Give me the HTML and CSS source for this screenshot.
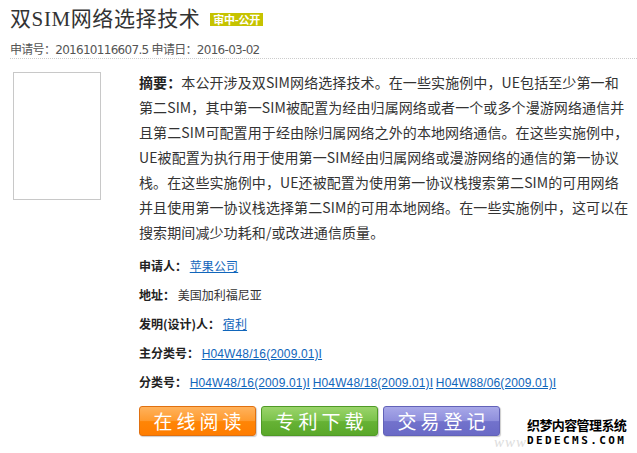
FILE: index.html
```html
<!DOCTYPE html>
<html lang="zh-CN">
<head>
  <meta charset="UTF-8">
  <title>双SIM网络选择技术</title>
  <link rel="stylesheet" href="styles.css">
</head>
<body>
  <div class="page">
    <div class="head">
      <div class="title-row">
        <h1>双SIM网络选择技术</h1>
        <span class="badge">审中-公开</span>
      </div>
      <p class="sub">申请号：201610116607.5 申请日：2016-03-02</p>
    </div>

    <div class="main">
      <div class="thumb"></div>
      <div class="info">
        <p class="abstract"><b>摘要：</b>本公开涉及双SIM网络选择技术。在一些实施例中，UE包括至少第一和<br>第二SIM，其中第一SIM被配置为经由归属网络或者一个或多个漫游网络通信并<br>且第二SIM可配置用于经由除归属网络之外的本地网络通信。在这些实施例中，<br>UE被配置为执行用于使用第一SIM经由归属网络或漫游网络的通信的第一协议<br>栈。在这些实施例中，UE还被配置为使用第一协议栈搜索第二SIM的可用网络<br>并且使用第一协议栈选择第二SIM的可用本地网络。在一些实施例中，这可以在<br>搜索期间减少功耗和/或改进通信质量。</p>

        <div class="rows">
          <div class="row"><b>申请人：</b> <a href="#">苹果公司</a></div>
          <div class="row"><b>地址：</b> 美国加利福尼亚</div>
          <div class="row"><b>发明(设计)人：</b> <a href="#">宿利</a></div>
          <div class="row"><b>主分类号：</b> <a href="#">H04W48/16(2009.01)I</a></div>
          <div class="row"><b>分类号：</b> <a href="#">H04W48/16(2009.01)I</a> <a href="#">H04W48/18(2009.01)I</a> <a href="#">H04W88/06(2009.01)I</a></div>
        </div>

        <div class="buttons">
          <a class="btn orange" href="#">在线阅读</a>
          <a class="btn green" href="#">专利下载</a>
          <a class="btn purple" href="#">交易登记</a>
        </div>
      </div>
    </div>

    <div class="watermark">
      <span class="wm-www">www</span>
      <span class="wm-cn">织梦内容管理系统</span>
      <span class="wm-en">DEDECMS.COM</span>
    </div>
  </div>
</body>
</html>
```

FILE: styles.css
```css
* {
  margin: 0;
  padding: 0;
  box-sizing: border-box;
}

html, body {
  height: 100%;
  background: #fff;
  font-family: "Noto Sans CJK SC", "DejaVu Sans", sans-serif;
  color: #333;
  overflow: hidden;
}

.page {
  position: relative;
  height: 100%;
}

.head {
  margin: 0 0 0 10px;
  padding-top: 4px;
  border-bottom: 1px dotted #ccc;
  height: 59px;
}

.title-row {
  display: flex;
  align-items: center;
  gap: 10px;
  height: 30px;
}

h1 {
  font-family: "Liberation Serif", "Noto Sans CJK SC", serif;
  font-size: 21px;
  font-weight: normal;
  color: #333;
  line-height: 30px;
  letter-spacing: 0.6px;
}

.badge {
  background: #c6c300;
  color: #fff;
  font-size: 11px;
  font-weight: bold;
  line-height: 13px;
  padding: 0 3px;
  margin-top: 1px;
  letter-spacing: -0.3px;
}

.sub {
  font-family: "DejaVu Sans", "Noto Sans CJK SC", sans-serif;
  font-size: 12px;
  color: #555;
  line-height: 16px;
  margin-top: 8px;
  letter-spacing: -0.7px;
}

.main {
  display: flex;
  padding-top: 11px;
}

.thumb {
  width: 88px;
  height: 128px;
  border: 1px solid #c8c8c8;
  margin: 2px 0 0 13px;
  flex: none;
}

.info {
  margin-left: 38px;
}

.abstract {
  font-size: 14px;
  line-height: 25px;
  white-space: nowrap;
  color: #333;
  letter-spacing: 0.1px;
}

.abstract b {
  color: #222;
}

.rows {
  margin-top: 6px;
}

.row {
  height: 29px;
  font-size: 12px;
  line-height: 29px;
  color: #333;
  white-space: nowrap;
}

.row b {
  color: #222;
}

.row a {
  color: #1166bb;
  text-decoration: underline;
  font-family: "Liberation Sans", "Noto Sans CJK SC", sans-serif;
  letter-spacing: 0.12px;
}

.buttons {
  display: flex;
  gap: 5px;
  margin-top: 10px;
}

.btn {
  display: block;
  width: 117px;
  height: 30px;
  line-height: 28px;
  border-radius: 3px;
  color: #fff;
  text-align: center;
  text-decoration: none;
  font-size: 19px;
  letter-spacing: 4px;
  text-indent: 4px;
  box-shadow: 1px 1px 1px rgba(0, 0, 0, 0.2);
}

.orange {
  background: linear-gradient(#ffb25c, #ff9a2e 50%, #ff8506 52%, #ff7d00);
  border: 1px solid #e07010;
}

.green {
  background: linear-gradient(#9ad46a, #7bc24b 50%, #66b235 52%, #5aa82a);
  border: 1px solid #4f9a26;
}

.purple {
  background: linear-gradient(#a8a8e8, #8e8edc 50%, #7272cc 52%, #6a6ac6);
  border: 1px solid #6262b8;
}

/* 水印 */
.watermark {
  position: absolute;
  left: 490px;
  top: 416px;
  width: 140px;
  height: 34px;
}

.wm-www {
  position: absolute;
  left: 4px;
  top: 18px;
  font-family: "Liberation Serif", serif;
  font-style: italic;
  font-size: 15px;
  line-height: 16px;
  color: #ddd;
  letter-spacing: 1px;
}

.wm-cn {
  position: absolute;
  left: 37px;
  top: 1px;
  font-size: 13px;
  font-weight: bold;
  color: #000;
  line-height: 15px;
  letter-spacing: -0.6px;
  text-shadow: 1px 1px 0 #fff, -1px -1px 0 #fff, 1px -1px 0 #fff, -1px 1px 0 #fff;
}

.wm-en {
  position: absolute;
  left: 37px;
  top: 18px;
  font-family: "DejaVu Sans Mono", monospace;
  font-size: 11px;
  font-weight: bold;
  color: #000;
  line-height: 13px;
  letter-spacing: 2.4px;
  text-shadow: 1px 1px 0 #fff, -1px -1px 0 #fff, 1px -1px 0 #fff, -1px 1px 0 #fff;
}
```
